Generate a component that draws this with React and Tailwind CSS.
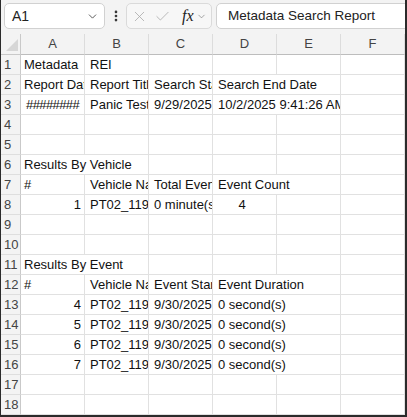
import React from 'react';
import { ChevronDown, X, Check, EllipsisVertical } from 'lucide-react';

const COLS = ['A', 'B', 'C', 'D', 'E', 'F'];

// each row: null = empty, string = left text, object = { t, span, align }
const ROWS = [
  ['Metadata', 'REI', null, null, null, null],
  ['Report Date', 'Report Title', 'Search Start Date', { t: 'Search End Date', span: 2 }, null],
  [{ t: '########', align: 'fill' }, 'Panic Test Report', '9/29/2025 9:41:26 AM', { t: '10/2/2025 9:41:26 AM', span: 2 }, null],
  [null, null, null, null, null, null],
  [null, null, null, null, null, null],
  [{ t: 'Results By Vehicle', span: 2 }, null, null, null, null],
  ['#', 'Vehicle Name', 'Total Event Duration', { t: 'Event Count', span: 2 }, null],
  [{ t: '1', align: 'right' }, 'PT02_1193', '0 minute(s) 0 second(s)', { t: '4', align: 'center' }, null, null],
  [null, null, null, null, null, null],
  [null, null, null, null, null, null],
  [{ t: 'Results By Event', span: 2 }, null, null, null, null],
  ['#', 'Vehicle Name', 'Event Start Date', { t: 'Event Duration', span: 2 }, null],
  [{ t: '4', align: 'right' }, 'PT02_1193', '9/30/2025 9:41:26 AM', { t: '0 second(s)', span: 2 }, null],
  [{ t: '5', align: 'right' }, 'PT02_1193', '9/30/2025 9:41:26 AM', { t: '0 second(s)', span: 2 }, null],
  [{ t: '6', align: 'right' }, 'PT02_1193', '9/30/2025 9:41:26 AM', { t: '0 second(s)', span: 2 }, null],
  [{ t: '7', align: 'right' }, 'PT02_1193', '9/30/2025 9:41:26 AM', { t: '0 second(s)', span: 2 }, null],
  [null, null, null, null, null, null],
  [null, null, null, null, null, null],
];

const buildCells = (row) => {
  const cells = [];
  let col = 0;
  let i = 0;
  while (col < 6) {
    const raw = row[i] ?? null;
    const cell = typeof raw === 'string' ? { t: raw } : raw || { t: '' };
    const span = cell.span || 1;
    cells.push({ ...cell, span, align: cell.align || 'left', col });
    col += span;
    i += 1;
  }
  return cells;
};

// column A sits a little tighter to its gridline than the others
const padClass = (cell) => {
  if (cell.align === 'right') return 'text-right pr-[3px]';
  if (cell.align === 'center') return 'text-center pr-[5px]';
  if (cell.align === 'fill') return 'text-left pl-[5px] tracking-[-0.6px]';
  return cell.col === 0 ? 'text-left pl-[3px]' : 'text-left pl-[5px]';
};

const Toolbar = () => (
  <div className="h-[34px] bg-[#f3f3f3] flex items-start pt-[3px] pl-[3px] overflow-hidden">
    {/* name box */}
    <div className="shrink-0 w-[101px] h-[26px] bg-white border border-[#d1d1d1] rounded-[5px] flex items-center justify-between pl-[7px] pr-[5px]">
      <span className="text-[14px] text-[#222]">A1</span>
      <ChevronDown size={13} strokeWidth={1.6} className="text-[#444]" />
    </div>
    <div className="shrink-0 w-[21px] h-[26px] flex items-center justify-center">
      <EllipsisVertical size={14} strokeWidth={2.6} className="text-[#333]" />
    </div>
    {/* cancel / enter / fx */}
    <div className="shrink-0 w-[86px] h-[26px] border border-[#dadada] rounded-[5px] bg-[#f7f7f7] flex items-center pl-[4px]">
      <X size={17} strokeWidth={1.1} className="text-[#a8a8a8]" />
      <Check size={17} strokeWidth={1.1} className="text-[#a8a8a8] ml-[6px]" />
      <span className="ml-[11px] text-[16px] italic text-[#222] font-['Liberation_Serif',serif] leading-none">fx</span>
      <ChevronDown size={11} strokeWidth={1.4} className="text-[#777] ml-[2px]" />
    </div>
    <div className="shrink-0 ml-[4px] w-[240px] h-[26px] bg-white border border-[#d1d1d1] rounded-[5px] flex items-center pl-[11px]">
      <span className="text-[13.5px] text-[#222] whitespace-nowrap">Metadata Search Report</span>
    </div>
  </div>
);

const ColumnHeader = () => (
  <div className="grid grid-cols-[20px_repeat(6,64px)] h-[21px] bg-[#f3f3f3]">
    <div className="border-r border-b border-[#c9c9c9] relative">
      <svg width="20" height="20" viewBox="0 0 20 20" className="absolute left-0 top-0">
        <polygon points="17,5 17,17 5,17" fill="#d6d6d6" />
      </svg>
    </div>
    {COLS.map((c) => (
      <div
        key={c}
        className="border-r border-b border-r-[#dcdcdc] border-b-[#bdbdbd] text-[13px] text-[#444] flex items-center justify-center"
      >
        {c}
      </div>
    ))}
  </div>
);

const spanClass = { 1: 'col-span-1', 2: 'col-span-2', 3: 'col-span-3' };

const Sheet = () => (
  <div className="grid grid-cols-[20px_repeat(6,64px)]">
    {ROWS.map((row, r) => (
      <React.Fragment key={r}>
        <div className="h-[20px] bg-[#f3f3f3] border-r border-b border-r-[#c9c9c9] border-b-[#dedede] text-[13px] text-[#444] pl-[3px] leading-[19px]">
          {r + 1}
        </div>
        {buildCells(row).map((cell, c) => (
          <div
            key={c}
            className={`h-[20px] border-r border-b border-[#e1e1e1] overflow-hidden whitespace-nowrap text-[13px] leading-[19px] text-[#111] ${spanClass[cell.span]} ${padClass(cell)}`}
          >
            {cell.t}
          </div>
        ))}
      </React.Fragment>
    ))}
  </div>
);

export default function App() {
  return (
    <div className="w-[407px] h-[417px] bg-white border-l border-r-2 border-b-2 border-[#2b2b2b] overflow-hidden font-['Liberation_Sans',Arial,sans-serif]">
      <Toolbar />
      <ColumnHeader />
      <Sheet />
    </div>
  );
}
